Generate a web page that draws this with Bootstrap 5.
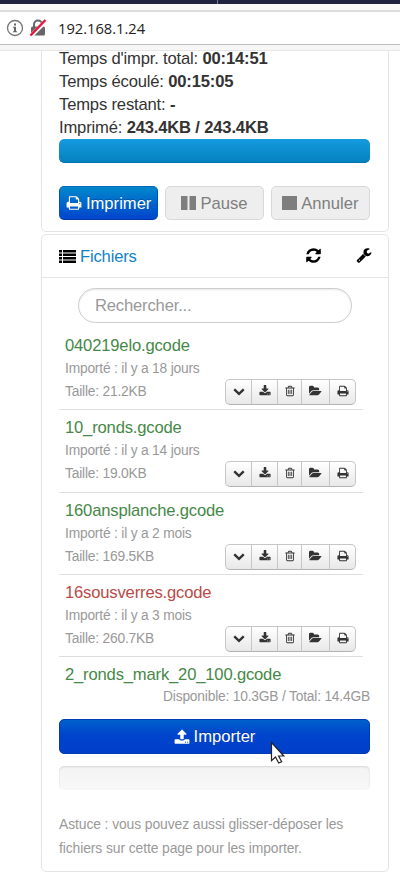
<!DOCTYPE html>
<html lang="fr">
<head>
<meta charset="utf-8">
<meta name="viewport" content="width=device-width, initial-scale=1">
<title>OctoPrint</title>
<link rel="stylesheet" href="https://cdn.jsdelivr.net/npm/bootstrap@5.3.0/dist/css/bootstrap.min.css">
<style>
html,body{height:888px;overflow:hidden}
body{font-family:"Liberation Sans",Arial,sans-serif;font-size:16.6px;letter-spacing:-.17px;line-height:23.2px;color:#333;background:#fff}
svg{display:block;fill:currentColor;flex:none}
.tabstrip{height:4px;background:#20203f}
.tabstrip i{display:block;width:1px;height:4px;margin-left:217px;background:#77778c}
.toolbar-gap{height:6px;background:#f8f8f9}
.urlbar{height:35px;border-top:2px solid #dedede;border-bottom:1px solid #bcbcbc;padding-left:6px;font:14.7px/34px "Open Sans",sans-serif;letter-spacing:0;color:#222}
.urltext{margin-left:10px}
.chrome-end{height:6px;background:#f6f6f6;border-bottom:1px solid #e6e6e6}
.viewport-area{height:837px;padding-left:41px}
.panel{width:348px;border:1px solid #e5e5e5;border-radius:5px;padding:0 18px 0 17px}
.state{display:flow-root;height:181px;border-top:0;border-radius:0 0 5px 5px;margin-bottom:2px}
.state .first-line{margin-top:-4.4px}
.state-bar{height:24px;border-radius:5px;background:#eee}
.state-bar .progress-bar{background:linear-gradient(#149bdf,#0480be);border-radius:5px;box-shadow:inset 0 -1px 0 #0675ad}
.controls{margin-top:23px;gap:6.5px}
.controls .btn{flex:1 1 0;height:34px;padding:0;font-size:16.6px;line-height:23px;border-radius:5px;gap:4px}
.btn-print,.btn-import{color:#fff;border:1px solid #003bb3;text-shadow:0 -1px 0 rgba(0,0,0,.25)}
.btn-print{background:linear-gradient(#0088cc,#0044cc);border-color:#0067b8 #0050c0 #0038a8}
.btn-off,.btn-off:disabled{background:#eee;border:1px solid #d8d8d8;color:#7e7e7e;opacity:1}
.files{height:638px}
.files-head{height:43px;margin:0 -18px 0 -17px;padding:1px 16px 0 17px;border-bottom:1px solid #e5e5e5}
.files-head a{color:#1182c8;text-decoration:none;margin-left:4px}
.files-head .tools{color:#000;gap:34px;margin-top:-2px}
.search{width:274px;height:35px;margin:10px 0 0 19px;border:1px solid #ccc;border-radius:18px;padding:0 16px;font-size:16.6px;letter-spacing:-.17px;box-shadow:inset 0 1px 2px rgba(0,0,0,.09)}
.search::placeholder{color:#999;opacity:1}
.filelist{width:304px;height:362px;padding-top:5px}
.entry{height:82.3px;padding:6px 6px 0;border-bottom:1px solid #dedede}
.entry:last-child{border-bottom:0;height:28px}
.entry .fname{color:#468847;height:23px}
.entry .fname.done{color:#b94a48}
.meta{font-size:13.8px;letter-spacing:-.2px;color:#999;line-height:23px}
.avail{height:23px}
.actions{height:26px;margin-top:-1px;margin-right:1px}
.actions .btn{height:26px;padding:0 0 2px;border:1px solid #c6c6c6;border-bottom-color:#b3b3b3;border-radius:5px;background:linear-gradient(#fff,#e8e8e8);color:#333;display:flex;align-items:center;justify-content:center;flex:none}
.w-a{width:27px}.w-b{width:27px}.w-c{width:25px}.w-d{width:29px}.w-e{width:27px}
.btn-import{height:35px;margin-top:11px;padding:0;font-size:16.6px;line-height:23px;border-radius:5px;background:linear-gradient(#0060cc,#0044cc 45%,#003fc9);gap:4px}
.empty-bar{height:24px;margin-top:12px;border-radius:5px;background:linear-gradient(#f3f3f3,#f8f8f8);box-shadow:inset 0 1px 2px rgba(0,0,0,.12)}
.tip{font-size:13.9px;letter-spacing:-.1px;line-height:24px;color:#999;margin-top:22px;white-space:nowrap}
.pointer-arrow{position:absolute;left:270px;top:741px}
</style>
</head>
<body>
<svg width="0" height="0" class="position-absolute" aria-hidden="true">
<symbol id="i-print" viewBox="0 0 1792 1792"><path d="M448 1536h896v-256h-896v256zm0-640h896v-384h-160q-40 0-68-28t-28-68v-160h-640v640zm1152 64q0-26-19-45t-45-19-45 19-19 45 19 45 45 19 45-19 19-45zm128 0v416q0 13-9.500 22.500t-22.500 9.500h-224v160q0 40-28 68t-68 28h-960q-40 0-68-28t-28-68v-160h-224q-13 0-22.500-9.500t-9.500-22.500v-416q0-79 56.500-135.500t135.500-56.500h64v-544q0-40 28-68t68-28h672q40 0 88 20t76 48l152 152q28 28 48 76t20 88v256h64q79 0 135.500 56.500t56.500 135.500z"/></symbol>
<symbol id="i-refresh" viewBox="0 0 1792 1792"><path d="M1639 1056q0 5-1 7-64 268-268 434.500t-478 166.500q-146 0-282.500-55t-243.500-157l-129 129q-19 19-45 19t-45-19-19-45v-448q0-26 19-45t45-19h448q26 0 45 19t19 45-19 45l-137 137q71 66 161 102t187 36q134 0 250-65t186-179q11-17 53-117 8-23 30-23h192q13 0 22.500 9.500t9.500 22.500zm25-800v448q0 26-19 45t-45 19h-448q-26 0-45-19t-19-45 19-45l138-138q-148-137-349-137-134 0-250 65t-186 179q-11 17-53 117-8 23-30 23h-199q-13 0-22.500-9.500t-9.500-22.500v-7q65-268 270-434.500t480-166.500q146 0 284 55.500t245 156.500l130-129q19-19 45-19t45 19 19 45z"/></symbol>
<symbol id="i-wrench" viewBox="0 0 1792 1792"><path d="M448 1472q0-26-19-45t-45-19-45 19-19 45 19 45 45 19 45-19 19-45zm644-420l-682 682q-37 37-90 37-52 0-91-37l-106-108q-38-36-38-90 0-53 38-91l681-681q39 98 114.500 173.500t173.500 114.500zm634-435q0 39-23 106-47 134-164.500 217.500t-258.500 83.500q-185 0-316.500-131.500t-131.500-316.500 131.500-316.500 316.500-131.500q58 0 121.500 16.500t107.500 46.500q16 11 16 28t-16 28l-293 169v224l193 107q5-3 79-48.500t135.500-81 70.500-35.500q15 0 23.500 10t8.500 25z"/></symbol>
<symbol id="i-down" viewBox="0 0 1792 1792"><path d="M1683 808l-742 741q-19 19-45 19t-45-19l-742-741q-19-19-19-45.500t19-45.500l166-165q19-19 45-19t45 19l531 531 531-531q19-19 45-19t45 19l166 165q19 19 19 45.500t-19 45.500z"/></symbol>
<symbol id="i-download" viewBox="0 0 1792 1792"><path d="M1344 1344q0-26-19-45t-45-19-45 19-19 45 19 45 45 19 45-19 19-45zm256 0q0-26-19-45t-45-19-45 19-19 45 19 45 45 19 45-19 19-45zm128-224v320q0 40-28 68t-68 28h-1472q-40 0-68-28t-28-68v-320q0-40 28-68t68-28h465l135 136q58 56 136 56t136-56l136-136h464q40 0 68 28t28 68zm-325-569q17 41-14 70l-448 448q-18 19-45 19t-45-19l-448-448q-31-29-14-70 17-39 59-39h256v-448q0-26 19-45t45-19h256q26 0 45 19t19 45v448h256q42 0 59 39z"/></symbol>
<symbol id="i-upload" viewBox="0 0 1792 1792"><path d="M1344 1472q0-26-19-45t-45-19-45 19-19 45 19 45 45 19 45-19 19-45zm256 0q0-26-19-45t-45-19-45 19-19 45 19 45 45 19 45-19 19-45zm128-224v320q0 40-28 68t-68 28h-1472q-40 0-68-28t-28-68v-320q0-40 28-68t68-28h427q21 56 70.500 92t110.500 36h256q61 0 110.500-36t70.500-92h427q40 0 68 28t28 68zm-325-648q-17 40-59 40h-256v448q0 26-19 45t-45 19h-256q-26 0-45-19t-19-45v-448h-256q-42 0-59-40-17-39 14-69l448-448q18-19 45-19t45 19l448 448q31 30 14 69z"/></symbol>
<symbol id="i-folder" viewBox="0 0 1856 1792"><path d="M1815 952q0 31-31 66l-336 396q-43 51-120.500 86.500t-143.500 35.500h-1088q-34 0-60.500-13t-26.500-43q0-31 31-66l336-396q43-51 120.500-86.500t143.500-35.500h1088q34 0 60.500 13t26.500 43zm-343-344v160h-832q-94 0-197 47.500t-164 119.500l-337 396-5 6q0-4-.5-12.500t-.5-12.500v-960q0-92 66-158t158-66h320q92 0 158 66t66 158v32h544q92 0 158 66t66 158z"/></symbol>
<symbol id="i-trash" viewBox="0 0 1792 1792"><path d="M704 736v576q0 14-9 23t-23 9h-64q-14 0-23-9t-9-23v-576q0-14 9-23t23-9h64q14 0 23 9t9 23zm256 0v576q0 14-9 23t-23 9h-64q-14 0-23-9t-9-23v-576q0-14 9-23t23-9h64q14 0 23 9t9 23zm256 0v576q0 14-9 23t-23 9h-64q-14 0-23-9t-9-23v-576q0-14 9-23t23-9h64q14 0 23 9t9 23zm128 724v-948h-896v948q0 22 7 40.500t14.500 27 10.500 8.500h832q3 0 10.500-8.500t14.500-27 7-40.500zm-672-1076h448l-48-117q-7-9-17-11h-317q-10 2-17 11zm928 32v64q0 14-9 23t-23 9h-96v948q0 83-47 143.500t-113 60.500h-832q-66 0-113-58.500t-47-141.500v-952h-96q-14 0-23-9t-9-23v-64q0-14 9-23t23-9h309l70-167q15-37 54-63t79-26h320q40 0 79 26t54 63l70 167h309q14 0 23 9t9 23z"/></symbol>
</svg>

<div class="tabstrip"><i></i></div>
<div class="toolbar-gap"></div>
<div class="urlbar d-flex align-items-center">
  <svg width="18" height="18" viewBox="0 0 18 18"><circle cx="9" cy="9" r="7.500" fill="none" stroke="#777" stroke-width="1.300"/><rect x="8" y="4.500" width="2" height="2" fill="#666"/><path d="M7 7.700h3v4.500h1v1H7v-1h1V8.700H7z" fill="#666"/></svg>
  <svg class="ms-1" width="20" height="20" viewBox="0 0 20 20"><path d="M6 9V6.500a4 4 0 0 1 8 0V9" fill="none" stroke="#666" stroke-width="2"/><rect x="3" y="8.500" width="14" height="9" rx="1.500" fill="#666"/><path d="M2.500 18.500L18 3" stroke="#fff" stroke-width="4"/><path d="M2.500 17.500L17.500 2" stroke="#e8173f" stroke-width="2.500"/></svg>
  <span class="urltext">192.168.1.24</span>
</div>
<div class="chrome-end"></div>

<main class="viewport-area">
  <section class="panel state">
    <div class="first-line">Temps d'impr. total: <strong>00:14:51</strong></div>
    <div>Temps écoulé: <strong>00:15:05</strong></div>
    <div>Temps restant: <strong>-</strong></div>
    <div>Imprimé: <strong>243.4KB / 243.4KB</strong></div>
    <div class="progress state-bar"><div class="progress-bar w-100"></div></div>
    <div class="controls d-flex">
      <button class="btn btn-print d-flex align-items-center justify-content-center"><svg width="16" height="16"><use href="#i-print"/></svg>Imprimer</button>
      <button class="btn btn-off d-flex align-items-center justify-content-center" disabled><svg width="15" height="14" viewBox="0 0 15 14"><path d="M0 0h6.500v14H0zM8.500 0H15v14H8.500z"/></svg>Pause</button>
      <button class="btn btn-off d-flex align-items-center justify-content-center" disabled><svg width="15" height="14" viewBox="0 0 15 14"><path d="M0 0h15v14H0z"/></svg>Annuler</button>
    </div>
  </section>

  <section class="panel files">
    <div class="files-head d-flex align-items-center">
      <svg width="17" height="13" viewBox="0 0 17 13"><path d="M0 0h3v2.500H0zM4 0h13v2.500H4zM0 3.500h3V6H0zM4 3.500h13V6H4zM0 7h3v2.500H0zM4 7h13v2.500H4zM0 10.500h3V13H0zM4 10.500h13V13H4z" fill="#000"/></svg>
      <a href="#">Fichiers</a>
      <div class="tools d-flex ms-auto"><svg width="17" height="17"><use href="#i-refresh"/></svg><svg width="16" height="16"><use href="#i-wrench"/></svg></div>
    </div>
    <input class="form-control search" type="text" placeholder="Rechercher...">
    <div class="filelist" id="filelist"></div>
    <div class="meta text-end avail">Disponible: 10.3GB / Total: 14.4GB</div>
    <button class="btn btn-import w-100 d-flex align-items-center justify-content-center"><svg width="16" height="16"><use href="#i-upload"/></svg>Importer</button>
    <div class="empty-bar"></div>
    <div class="tip">Astuce : vous pouvez aussi glisser-déposer les<br>fichiers sur cette page pour les importer.</div>
  </section>
</main>
<svg class="pointer-arrow" width="16" height="25" viewBox="0 0 16 25"><path d="M1.500 1.500v18.200l4-3.700 3.200 6 3-1.300-3.100-5.700h5.200z" fill="#fff" stroke="#222" stroke-width="1.200"/></svg>

<script>
const files = [
  ["040219elo.gcode", "18 jours", "21.2KB"],
  ["10_ronds.gcode", "14 jours", "19.0KB"],
  ["160ansplanche.gcode", "2 mois", "169.5KB"],
  ["16sousverres.gcode", "3 mois", "260.7KB", "done"],
  ["2_ronds_mark_20_100.gcode"]
];
const icons = [["a","down",12],["b","download",12],["c","trash",12],["d","folder",13],["e","print",12]];
const buttons = icons.map(([w,n,s]) => `<button class="btn w-${w}"><svg width="${s}" height="12"><use href="#i-${n}"/></svg></button>`).join("");
document.getElementById("filelist").innerHTML = files.map(([name,age,size,cls]) =>
  `<div class="entry"><div class="fname ${cls||""}">${name}</div>` + (age ?
  `<div class="meta">Importé : il y a ${age}</div><div class="d-flex justify-content-between meta"><span>Taille: ${size}</span><div class="btn-group actions">${buttons}</div></div>` : "") + `</div>`).join("");
</script>
<script src="https://cdn.jsdelivr.net/npm/bootstrap@5.3.0/dist/js/bootstrap.bundle.min.js"></script>
</body>
</html>
